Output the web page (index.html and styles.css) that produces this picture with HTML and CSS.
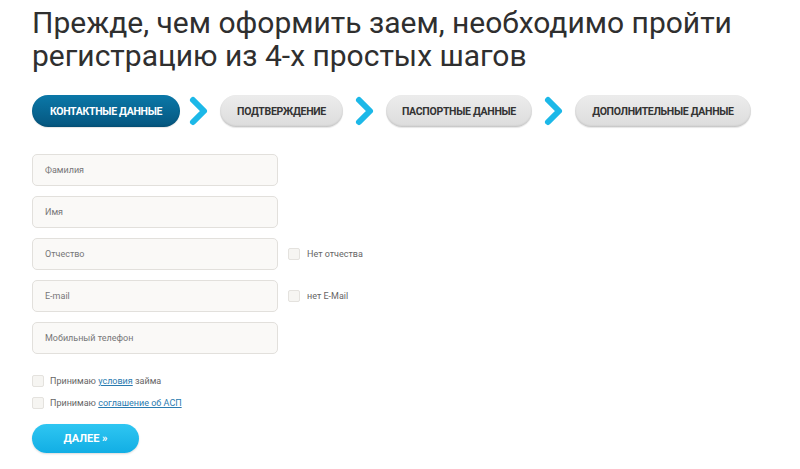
FILE: index.html
```html
<!DOCTYPE html>
<html lang="ru">
<head>
<meta charset="utf-8">
<link rel="stylesheet" href="styles.css">
</head>
<body>
<div class="page">
  <h1 class="title">Прежде, чем оформить заем, необходимо пройти регистрацию из 4-х простых шагов</h1>
  <div class="steps">
    <div class="step active">КОНТАКТНЫЕ ДАННЫЕ</div>
    <svg class="chev c1" viewBox="0 0 22 32"><path d="M5 5 L16 16 L5 27" fill="none" stroke="#1cb8e8" stroke-width="6" stroke-linecap="round" stroke-linejoin="round"/></svg>
    <div class="step s2">ПОДТВЕРЖДЕНИЕ</div>
    <svg class="chev c2" viewBox="0 0 22 32"><path d="M5 5 L16 16 L5 27" fill="none" stroke="#1cb8e8" stroke-width="6" stroke-linecap="round" stroke-linejoin="round"/></svg>
    <div class="step s3">ПАСПОРТНЫЕ ДАННЫЕ</div>
    <svg class="chev c3" viewBox="0 0 22 32"><path d="M5 5 L16 16 L5 27" fill="none" stroke="#1cb8e8" stroke-width="6" stroke-linecap="round" stroke-linejoin="round"/></svg>
    <div class="step s4">ДОПОЛНИТЕЛЬНЫЕ ДАННЫЕ</div>
  </div>
  <div class="form">
    <div class="row"><div class="field">Фамилия</div></div>
    <div class="row"><div class="field">Имя</div></div>
    <div class="row"><div class="field">Отчество</div><label class="side"><span class="box"></span>Нет отчества</label></div>
    <div class="row"><div class="field">E-mail</div><label class="side"><span class="box"></span>нет E-Mail</label></div>
    <div class="row"><div class="field">Мобильный телефон</div></div>
  </div>
  <div class="agree">
    <label class="chk"><span class="box"></span>Принимаю&nbsp;<a href="#">условия</a>&nbsp;займа</label>
    <label class="chk"><span class="box"></span>Принимаю&nbsp;<a href="#">соглашение об АСП</a></label>
  </div>
  <button class="next">ДАЛЕЕ »</button>
</div>
</body>
</html>
```
FILE: styles.css
```css
* { box-sizing: border-box; }
html, body { margin: 0; padding: 0; background: #fff; }
body { font-family: Roboto, "Noto Sans", sans-serif; color: #333; }
.page { padding: 6px 0 0 32px; width: 800px; height: 469px; overflow: hidden; }
.title {
  margin: 0;
  font-weight: 400;
  font-size: 30px;
  line-height: 33px;
  color: #2f2f2f;
  width: 740px;
}
.steps { display: flex; align-items: center; margin-top: 23px; height: 32px; }
.step {
  height: 32px;
  border-radius: 16px;
  display: flex; align-items: center; justify-content: center;
  font-size: 10.5px; font-weight: 700;
  color: #333;
  background: linear-gradient(#ececec, #dcdcdc);
  box-shadow: inset 0 -1px 2px rgba(0,0,0,0.12), 0 1px 1px rgba(0,0,0,0.1);
  letter-spacing: -0.3px;
}
.step.active {
  width: 148px;
  color: #fff;
  background: linear-gradient(#0b78a8, #05567f);
}
.s2 { width: 123px; }
.s3 { width: 146px; }
.s4 { width: 176px; }
.chev { width: 22px; height: 32px; flex: none; }
.c1 { margin: 0 10px 0 8px; }
.c2 { margin: 0 10px 0 11px; }
.c3 { margin: 0 10px 0 11px; }
.form { margin-top: 27px; display: flex; flex-direction: column; gap: 10px; }
.row { display: flex; align-items: center; height: 32px; }
.field {
  width: 246px; height: 32px;
  border: 1px solid #e2e0dc;
  border-radius: 5px;
  background: #faf9f7;
  font-size: 9px;
  color: #777;
  padding-left: 12px;
  display: flex; align-items: center;
}
.side { display: flex; align-items: center; margin-left: 10px; font-size: 9px; color: #666; }
.box {
  width: 12px; height: 12px;
  border: 1px solid #e4e2de;
  border-radius: 2px;
  background: #f6f5f2;
  margin-right: 7px;
  flex: none;
}
.agree { margin-top: 21px; display: flex; flex-direction: column; gap: 10px; }
.chk { display: flex; align-items: center; font-size: 9px; color: #666; height: 12px; }
.chk .box { margin-right: 6px; }
.chk a { color: #2a7bb0; text-decoration: underline; }
.next {
  display: block;
  margin-top: 15px;
  width: 107px; height: 29px;
  border: none;
  border-radius: 15px;
  background: linear-gradient(#2fc6f2, #12aee4);
  box-shadow: 0 1px 2px rgba(0,0,0,0.15);
  color: #fff;
  font-family: Roboto, sans-serif;
  font-size: 11px;
  font-weight: 700;
}
```
